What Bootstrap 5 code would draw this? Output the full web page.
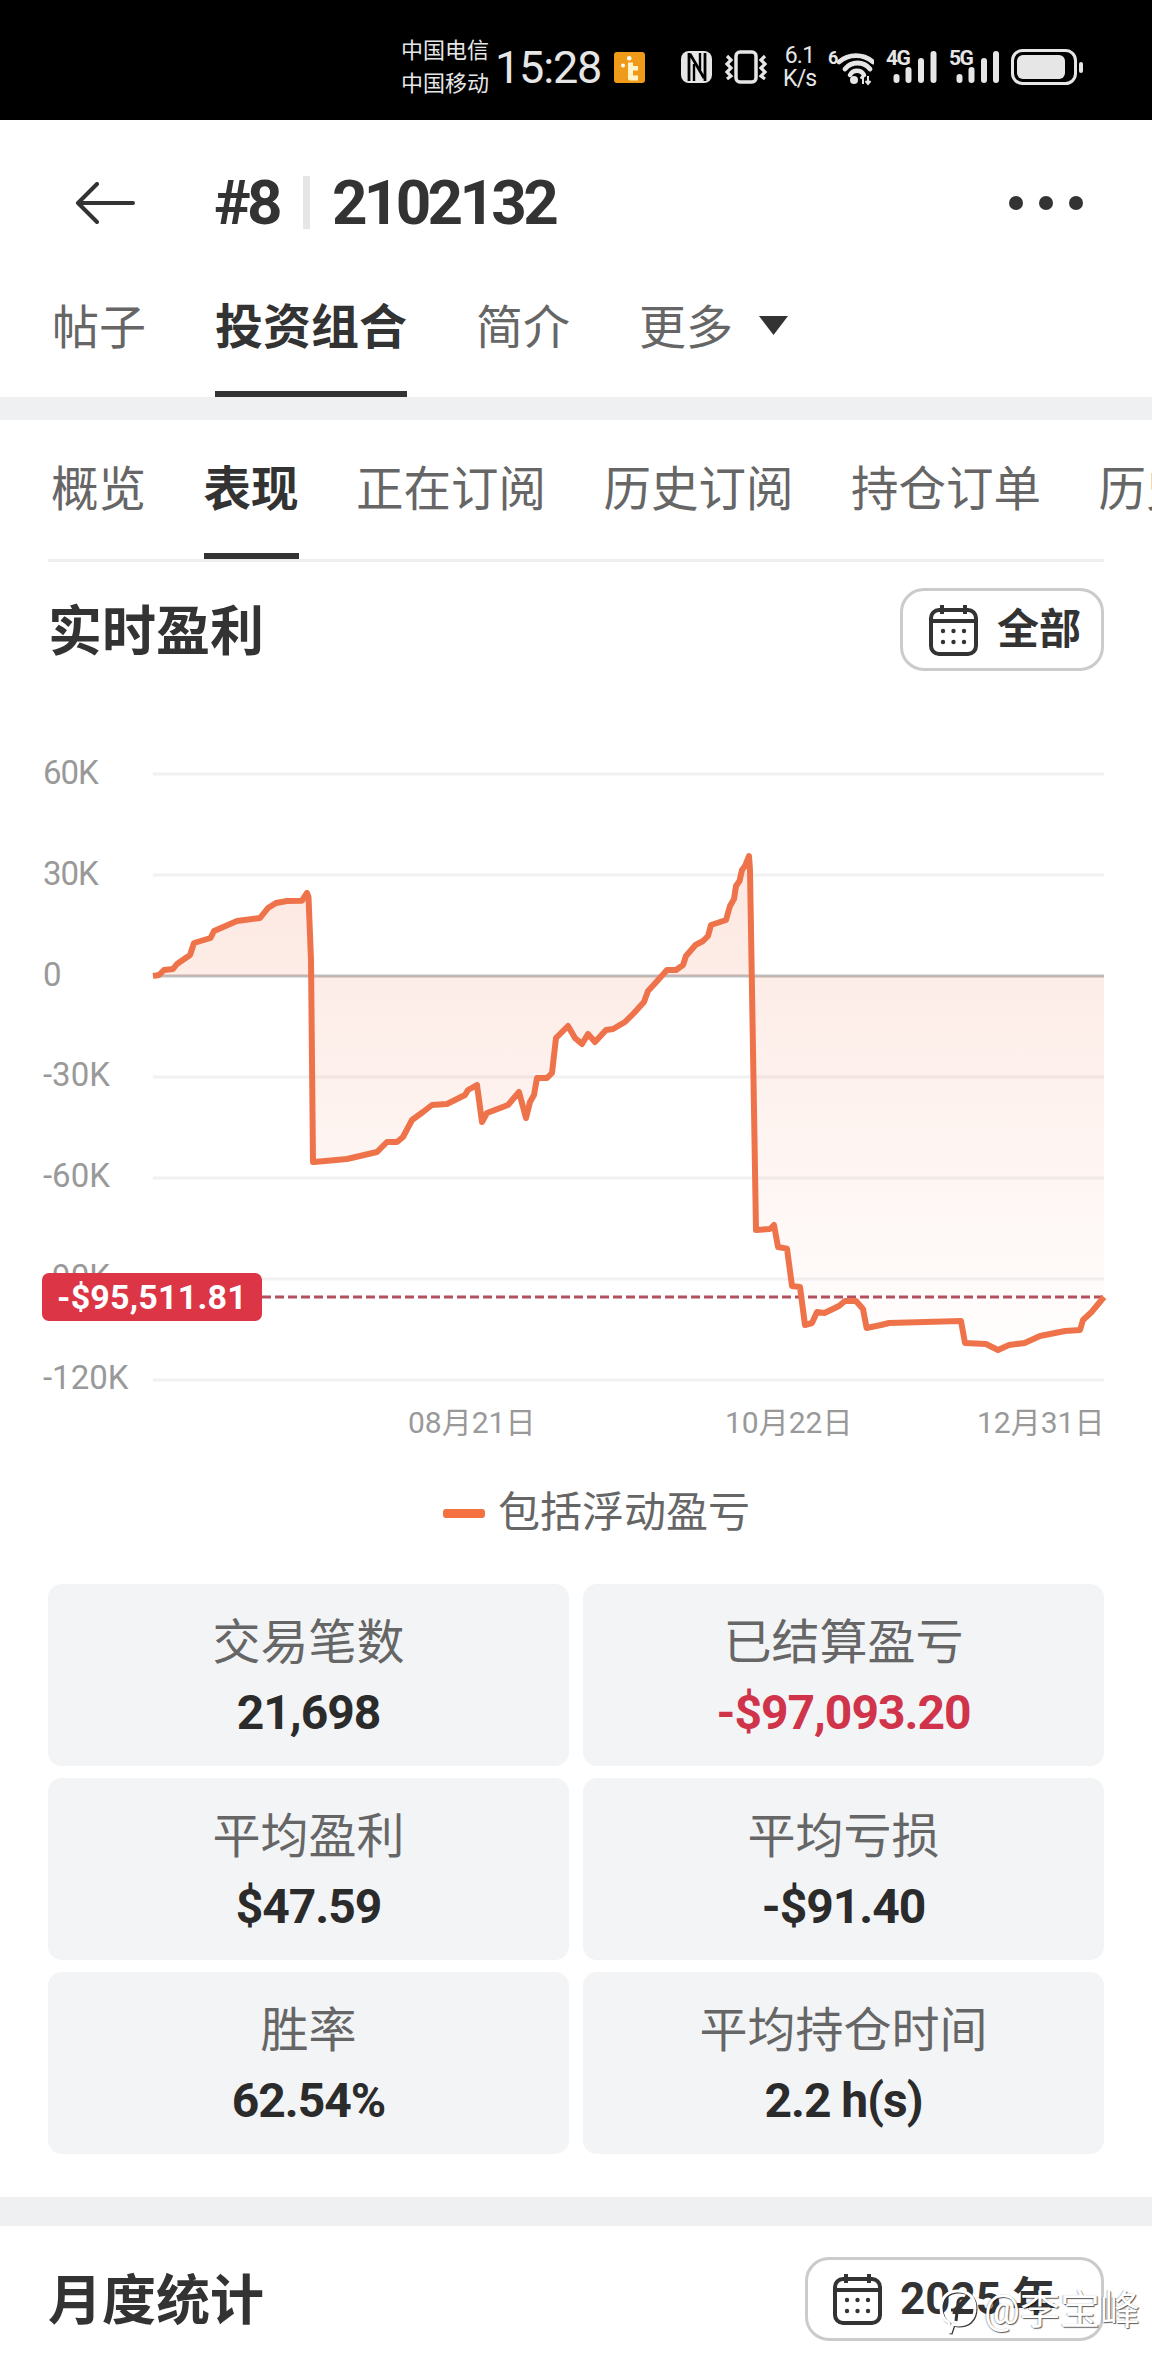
<!DOCTYPE html>
<html lang="zh-CN">
<head>
<meta charset="utf-8">
<title>#8 2102132</title>
<link href="https://cdn.jsdelivr.net/npm/bootstrap@5.3.0/dist/css/bootstrap.min.css" rel="stylesheet">
<style>
html,body{margin:0;background:#fff;overflow-x:hidden}
body{font-family:Roboto,"Noto Sans CJK SC",sans-serif;color:#333}
.pg{width:1152px;height:2376px;position:relative;overflow:hidden}
.sbar{height:120px;background:#000;color:#e6e6e6;padding:14px 0 0 401px;gap:12px}
.carrier{font-size:22px;line-height:33px;width:88px;margin-right:-6px;white-space:nowrap}
.clock{font-size:45px;line-height:1;width:104px;letter-spacing:-1.2px;white-space:nowrap;margin-right:3px}
.speed{font-size:23px;line-height:23px;width:33px;text-align:center;letter-spacing:-.8px}
.sbar svg{display:block;flex:none}
.topbar{height:160px;padding:5px 68px 0 75px}
.ptitle{font-size:62px;font-weight:700;line-height:1;letter-spacing:-3.7px;color:#333}
.ptitle-a{margin-left:79px}
.vbar{width:7px;height:53px;background:#e6e6e6;margin:0 22px 0 24px}
.mtabs{padding:18px 0 0 52px;height:117px;flex-wrap:nowrap}
.mtab{font-size:47px;line-height:60px;height:99px;padding:0;color:#666;margin-right:69px;border-bottom:6px solid transparent;white-space:nowrap;display:flex;align-items:flex-start;text-decoration:none}
.mtab:hover{color:#666}
.mtab.on,.mtab.on:hover{color:#333;font-size:48px;font-weight:700;border-bottom-color:#333}
.mtab-tri{margin:17px 0 0 25px}
.band{background:#eff0f2}
.band-a{height:23px}
.band-b{height:29px;margin-top:43px}
.stabs{margin:0 48px;border-bottom:3px solid #eeeeee;padding:40px 0 0 3px;gap:57.5px;flex-wrap:nowrap;white-space:nowrap;height:142px}
.stab{font-size:47.500px;line-height:60px;color:#666;padding-bottom:33px;border-bottom:6px solid transparent;height:99px}
.stab.on{color:#333;font-weight:700;border-bottom-color:#333}
.shead{margin:0 48px}
.shead-a{margin-top:26px}
.shead-b{margin-top:31px}
.sttl{font-size:54px;font-weight:700;line-height:1;margin:0;color:#333;padding:6px 0 0 0}
.rbtn{background:#fff;border:3px solid #cbcbcb;border-radius:24px;color:#333;font-weight:700;padding:0 20px 0 26px;height:83px;line-height:1}
.rbtn:hover{background:#fff;color:#333;border-color:#cbcbcb}
.rbtn-a{font-size:42px;gap:19px}
.rbtn-b{font-size:44px;gap:18px;height:84px;padding:0 45px 0 25px}
.chart{height:789px;position:relative}
.chart svg{display:block}
.chart text{font-family:Roboto,"Noto Sans CJK SC",sans-serif;fill:#999}
.ax-y{font-size:33px;letter-spacing:-1px}
.chart text.ax-n{letter-spacing:0}
.ax-x{font-size:30px}
.pnow{position:absolute;left:42px;top:602px;width:220px;height:48px;border-radius:7px;background:#dc3545;color:#fff;font-size:34px;font-weight:700;line-height:48px;text-align:center;letter-spacing:.2px}
.lgd{margin-top:23px;height:60px;padding-left:41px;gap:13px;font-size:42px;line-height:60px;color:#666}
.lgd-sw{width:42px;height:9px;border-radius:3px;background:#f3723f;margin-top:1px}
.sgrid{margin:41px 48px 0;display:grid;grid-template-columns:1fr 1fr;column-gap:14px;row-gap:12px}
.scell{height:182px;background:#f3f4f6;border-radius:14px;text-align:center;padding-top:29px}
.slab{font-size:48px;line-height:60px;color:#666}
.sval{font-size:48px;line-height:60px;font-weight:700;color:#2b2b2b;margin-top:10px;letter-spacing:-1px}
.sval.neg{color:#d0344a}
.wmark{position:absolute;left:938px;top:2286px;gap:6px;color:#fff;font-size:40px;line-height:48px;text-shadow:1px 1px 1px rgba(0,0,0,.65),-1px 0 1px rgba(0,0,0,.25)}
</style>
</head>
<body>
<div class="pg">
  <div class="sbar d-flex align-items-center">
    <div class="carrier">中国电信<br>中国移动</div>
    <div class="clock">15:28</div>
    <svg width="31" height="31" viewBox="0 0 31 31" aria-hidden="true"><rect width="31" height="31" rx="3" fill="#f09a1a"/><rect x="13" y="4" width="4.500" height="4.500" rx="2" fill="#fff"/><path d="M14 10.500h5v3.500h5v4.500h-5v5h5v5H16a2 2 0 0 1-2-2z" fill="#fff3c9"/><rect x="7" y="11.500" width="4" height="4" rx="2" fill="#fff"/></svg>
    <svg class="ms-4" width="31" height="32" viewBox="0 0 31 32" aria-hidden="true"><rect width="31" height="32" rx="8" fill="#e6e6e6"/><path d="M8 2v28M24 2v28M9 3l14 24" fill="none" stroke="#000" stroke-width="2.800"/><path d="M13 13v17M19 2v17" stroke="#000" stroke-width="2.400"/></svg>
    <svg width="47" height="34" viewBox="0 0 47 34" aria-hidden="true"><rect x="12" y="2" width="20" height="30" rx="4" fill="none" stroke="#e6e6e6" stroke-width="3.500"/><path d="M3 6l4 4-4 4 4 4-4 4 4 4-4 3M41 6l-4 4 4 4-4 4 4 4-4 4 4 3" fill="none" stroke="#e6e6e6" stroke-width="3.200"/></svg>
    <div class="speed">6.1<br>K/s</div>
    <svg width="46" height="46" viewBox="0 -5 46 46" aria-hidden="true"><text x="0" y="15" font-size="18" font-weight="700" fill="#e6e6e6" font-family="Roboto,sans-serif">6</text><path d="M11 13a26 26 0 0 1 34 0" fill="none" stroke="#e6e6e6" stroke-width="4.800" stroke-linecap="round"/><path d="M17 20a16 16 0 0 1 25 0" fill="none" stroke="#e6e6e6" stroke-width="4.800" stroke-linecap="round"/><path d="M22 26a8 8 0 0 1 14 0" fill="none" stroke="#e6e6e6" stroke-width="4.500" stroke-linecap="round"/><circle cx="26" cy="31" r="4" fill="#e6e6e6"/><path d="M35 35v-8M32.500 29.500l2.500-3 M40 27v8M37.500 32l2.500 3 2.500-3" stroke="#e6e6e6" stroke-width="2" fill="none"/></svg>
    <svg width="51" height="44" viewBox="0 -5 51 44" aria-hidden="true"><text x="0" y="15" font-size="21" font-weight="700" letter-spacing="-1.500" fill="#e6e6e6" font-family="Roboto,sans-serif">4G</text><g fill="#e6e6e6"><rect x="7.500" y="24" width="6" height="9" rx="3"/><rect x="19.500" y="17" width="6" height="16" rx="3"/><rect x="32" y="8" width="6" height="25" rx="3"/><rect x="44.500" y="1" width="6" height="32" rx="3"/></g></svg>
    <svg width="50" height="44" viewBox="0 -5 50 44" aria-hidden="true"><text x="0" y="15" font-size="21" font-weight="700" letter-spacing="-1.500" fill="#e6e6e6" font-family="Roboto,sans-serif">5G</text><g fill="#e6e6e6"><rect x="7.500" y="24" width="6" height="9" rx="3"/><rect x="19.500" y="17" width="6" height="16" rx="3"/><rect x="32" y="8" width="6" height="25" rx="3"/><rect x="44" y="1" width="6" height="32" rx="3"/></g></svg>
    <svg width="73" height="36" viewBox="0 0 73 36" aria-hidden="true"><rect x="1.500" y="1.500" width="63" height="33" rx="10" fill="none" stroke="#e6e6e6" stroke-width="3"/><rect x="6" y="6" width="48" height="24" rx="6" fill="#e6e6e6"/><rect x="68" y="13" width="4" height="11" rx="2" fill="#e6e6e6"/></svg>
  </div>

  <header class="topbar d-flex align-items-center">
    <svg width="60" height="42" viewBox="0 0 60 42" aria-hidden="true"><path d="M58 21H4M22 2L3 21l19 19" fill="none" stroke="#333" stroke-width="4" stroke-linecap="round" stroke-linejoin="round"/></svg>
    <div class="ptitle ptitle-a">#8</div>
    <div class="vbar"></div>
    <div class="ptitle">2102132</div>
    <svg class="ms-auto" width="76" height="16" viewBox="0 0 76 16" aria-hidden="true"><g fill="#333"><circle cx="8" cy="8" r="7"/><circle cx="38" cy="8" r="7"/><circle cx="68" cy="8" r="7"/></g></svg>
  </header>

  <ul class="nav mtabs">
    <li class="nav-item"><a class="mtab" href="#">帖子</a></li>
    <li class="nav-item"><a class="mtab on" href="#">投资组合</a></li>
    <li class="nav-item"><a class="mtab" href="#">简介</a></li>
    <li class="nav-item"><a class="mtab" href="#">更多<svg class="mtab-tri" width="31" height="20" viewBox="0 0 31 20" aria-hidden="true"><path d="M1 1h29L15.500 20z" fill="#333"/></svg></a></li>
  </ul>
  <div class="band band-a"></div>

  <ul class="nav stabs">
    <li class="stab">概览</li>
    <li class="stab on">表现</li>
    <li class="stab">正在订阅</li>
    <li class="stab">历史订阅</li>
    <li class="stab">持仓订单</li>
    <li class="stab">历史订单</li>
  </ul>

  <div class="shead shead-a d-flex justify-content-between align-items-center">
    <h2 class="sttl">实时盈利</h2>
    <button class="btn rbtn rbtn-a d-inline-flex align-items-center" type="button">
      <svg width="49" height="52" viewBox="0 0 49 52" aria-hidden="true"><rect x="2" y="6" width="45" height="44" rx="8" fill="none" stroke="#333" stroke-width="4"/><path d="M2 17h45M13 1v9M36 1v9" fill="none" stroke="#333" stroke-width="4"/><g fill="#333"><circle cx="14" cy="27" r="2.200"/><circle cx="24.500" cy="27" r="2.200"/><circle cx="35" cy="27" r="2.200"/><circle cx="14" cy="38" r="2.200"/><circle cx="24.500" cy="38" r="2.200"/><circle cx="35" cy="38" r="2.200"/></g></svg>
      全部
    </button>
  </div>

  <div class="chart">
    <svg width="1152" height="789" viewBox="0 671 1152 789" role="img" aria-label="实时盈利曲线">
      <defs>
        <linearGradient id="pf" gradientUnits="userSpaceOnUse" x1="0" y1="860" x2="0" y2="1350">
          <stop offset="0" stop-color="#f1734a" stop-opacity=".17"/>
          <stop offset="1" stop-color="#f1734a" stop-opacity=".01"/>
        </linearGradient>
      </defs>
      <g stroke="#f1f1f1" stroke-width="3">
        <path d="M153 774H1104M153 875H1104M153 1077H1104M153 1178H1104M153 1279H1104M153 1380H1104"/>
      </g>
      <path d="M153 976H1104" stroke="#bdbdbd" stroke-width="3"/>
      <path fill="url(#pf)" d="M153 976L159 975L164 970L173 969L177 964L190 955L194 943L210.500 938L214 931L237 921L260 918L268 908L276 903L287 901L302 900.700L307 893L308.500 897L311 960L313 1162L314 1162L347 1159L377 1152L387 1142L397 1142L403 1137L412 1120L423 1112L432 1105L447 1104L465 1095L468 1090L477 1085L482 1122L487 1113L508 1105L519 1092L526 1118L530 1102L534 1095L537 1078L547 1078L552 1073L556 1038L568 1026L575 1038L582 1044L588 1034L595 1042L606 1030L613 1029L625 1022L634 1013L644 1002L648 991L654.500 984L667 970L676 970L683 965L686 956L695.500 945L703 941L708 936L711 925L726 920L730 906L734 899L736 886L739.500 881L742 870L745 866L749 856L750 870L756 1230L770 1229L774 1225L778 1247L787 1248.600L792 1286L800 1287L805 1325L812 1323L817 1312L824.500 1313L839 1306L845 1301L856 1301L863 1309L866.600 1328L881 1325L889 1323L961 1321L965 1343L986 1344L998 1350L1009 1345L1024.600 1343L1040 1336L1065 1331L1080 1330L1083 1320L1091.600 1312L1103 1298L1104 1297L1104 976Z"/>
      <path d="M262 1297H1104" stroke="#b2505f" stroke-width="3" stroke-dasharray="9 4"/>
      <path fill="none" stroke="#ef734a" stroke-width="6" stroke-linejoin="round" stroke-linecap="butt" d="M153 976L159 975L164 970L173 969L177 964L190 955L194 943L210.500 938L214 931L237 921L260 918L268 908L276 903L287 901L302 900.700L307 893L308.500 897L311 960L313 1162L314 1162L347 1159L377 1152L387 1142L397 1142L403 1137L412 1120L423 1112L432 1105L447 1104L465 1095L468 1090L477 1085L482 1122L487 1113L508 1105L519 1092L526 1118L530 1102L534 1095L537 1078L547 1078L552 1073L556 1038L568 1026L575 1038L582 1044L588 1034L595 1042L606 1030L613 1029L625 1022L634 1013L644 1002L648 991L654.500 984L667 970L676 970L683 965L686 956L695.500 945L703 941L708 936L711 925L726 920L730 906L734 899L736 886L739.500 881L742 870L745 866L749 856L750 870L756 1230L770 1229L774 1225L778 1247L787 1248.600L792 1286L800 1287L805 1325L812 1323L817 1312L824.500 1313L839 1306L845 1301L856 1301L863 1309L866.600 1328L881 1325L889 1323L961 1321L965 1343L986 1344L998 1350L1009 1345L1024.600 1343L1040 1336L1065 1331L1080 1330L1083 1320L1091.600 1312L1104 1297"/>
      <g class="ax-y">
        <text x="43" y="784">60K</text>
        <text x="43" y="885">30K</text>
        <text x="43" y="986">0</text>
        <text class="ax-n" x="43" y="1086">-30K</text>
        <text class="ax-n" x="43" y="1187">-60K</text>
        <text class="ax-n" x="43" y="1288">-90K</text>
        <text class="ax-n" x="43" y="1389">-120K</text>
      </g>
      <g class="ax-x">
        <text x="408" y="1433">08月21日</text>
        <text x="725" y="1433">10月22日</text>
        <text x="977" y="1433">12月31日</text>
      </g>
    </svg>
    <div class="pnow">-$95,511.81</div>
  </div>

  <div class="lgd d-flex justify-content-center align-items-center">
    <span class="lgd-sw"></span><span>包括浮动盈亏</span>
  </div>

  <div class="sgrid">
    <div class="scell"><div class="slab">交易笔数</div><div class="sval">21,698</div></div>
    <div class="scell"><div class="slab">已结算盈亏</div><div class="sval neg">-$97,093.20</div></div>
    <div class="scell"><div class="slab">平均盈利</div><div class="sval">$47.59</div></div>
    <div class="scell"><div class="slab">平均亏损</div><div class="sval">-$91.40</div></div>
    <div class="scell"><div class="slab">胜率</div><div class="sval">62.54%</div></div>
    <div class="scell"><div class="slab">平均持仓时间</div><div class="sval">2.2 h(s)</div></div>
  </div>

  <div class="band band-b"></div>

  <div class="shead shead-b d-flex justify-content-between align-items-center">
    <h2 class="sttl">月度统计</h2>
    <button class="btn rbtn rbtn-b d-inline-flex align-items-center" type="button">
      <svg width="49" height="52" viewBox="0 0 49 52" aria-hidden="true"><rect x="2" y="6" width="45" height="44" rx="8" fill="none" stroke="#333" stroke-width="4"/><path d="M2 17h45M13 1v9M36 1v9" fill="none" stroke="#333" stroke-width="4"/><g fill="#333"><circle cx="14" cy="27" r="2.200"/><circle cx="24.500" cy="27" r="2.200"/><circle cx="35" cy="27" r="2.200"/><circle cx="14" cy="38" r="2.200"/><circle cx="24.500" cy="38" r="2.200"/><circle cx="35" cy="38" r="2.200"/></g></svg>
      2025 年
    </button>
  </div>

  <div class="wmark d-flex align-items-center">
    <svg width="40" height="50" viewBox="0 0 40 50" aria-hidden="true"><path d="M20 5c10 0 17 6 17 17 0 12-8 17-17 17-2 0-4 0-5-1l-3 9-1-10C6 34 3 29 3 22 3 11 10 5 20 5z" fill="none" stroke="#333" stroke-width="3" transform="translate(1 1)"/><path d="M20 5c10 0 17 6 17 17 0 12-8 17-17 17-2 0-4 0-5-1l-3 9-1-10C6 34 3 29 3 22 3 11 10 5 20 5z" fill="none" stroke="#fff" stroke-width="3"/><path d="M27 13c-4-2-7 0-7 4l-2 18M13 24h12" fill="none" stroke="#333" stroke-width="3"/></svg>
    <span>@李宝峰</span>
  </div>
</div>
<script src="https://cdn.jsdelivr.net/npm/bootstrap@5.3.0/dist/js/bootstrap.bundle.min.js"></script>
</body>
</html>
